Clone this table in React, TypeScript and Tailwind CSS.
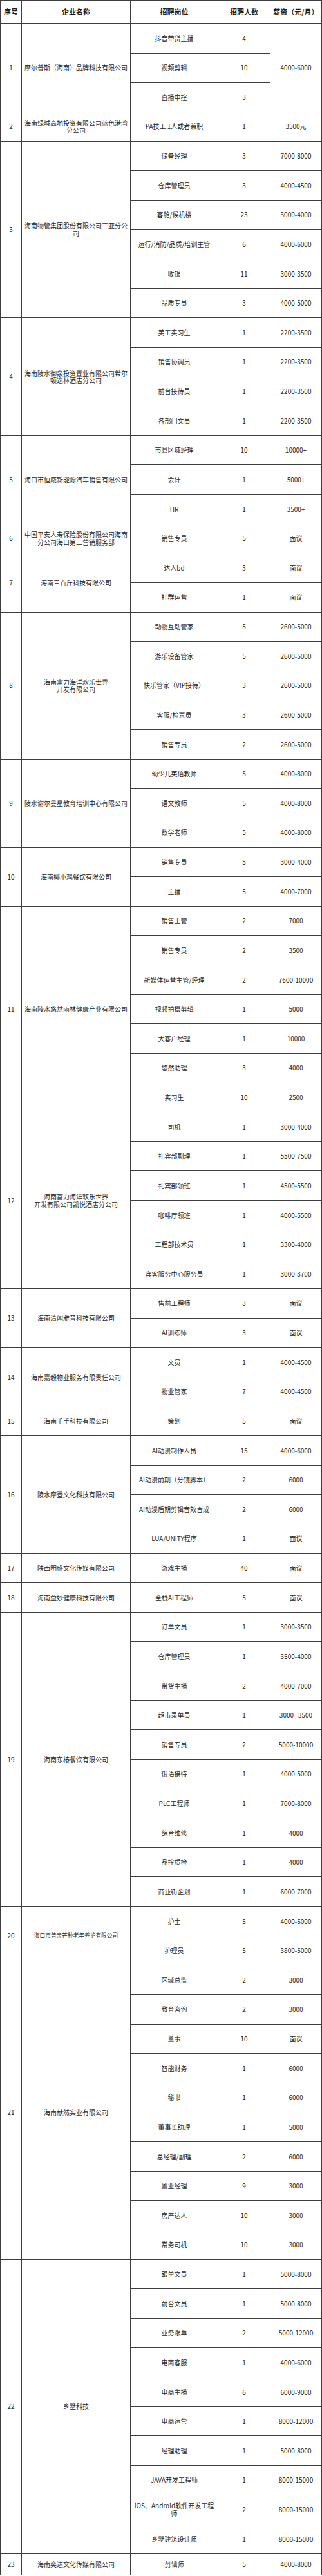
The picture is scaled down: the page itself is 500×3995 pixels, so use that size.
import * as React from 'react'
import clsx from 'clsx'

type Job = [string, string, string]

type Company = {
  name: string[]
  jobs: Job[]
  // one salary cell spanning every job row
  pay?: string
  small?: boolean
}

const spans: Record<number, string> = {
  1: 'row-span-1',
  2: 'row-span-2',
  3: 'row-span-3',
  4: 'row-span-4',
  5: 'row-span-5',
  6: 'row-span-6',
  7: 'row-span-7',
  10: 'row-span-10',
}

const companies: Company[] = [
  {
    name: ['摩尔普斯（海南）品牌科技有限公司'],
    pay: '4000-6000',
    jobs: [
      ['抖音带货主播', '4', ''],
      ['视频剪辑', '10', ''],
      ['直播中控', '3', ''],
    ],
  },
  {
    name: ['海南绿城高地投资有限公司蓝色港湾分公司'],
    jobs: [['PA技工 1人或者兼职', '1', '3500元']],
  },
  {
    name: ['海南物管集团股份有限公司三亚分公司'],
    jobs: [
      ['储备经理', '3', '7000-8000'],
      ['仓库管理员', '3', '4000-4500'],
      ['客舱/候机楼', '23', '3000-4000'],
      ['运行/消防/品质/培训主管', '6', '4000-6000'],
      ['收银', '11', '3000-3500'],
      ['品质专员', '3', '4000-5000'],
    ],
  },
  {
    name: ['海南陵水御泉投资置业有限公司希尔顿逸林酒店分公司'],
    jobs: [
      ['美工实习生', '1', '2200-3500'],
      ['销售协调员', '1', '2200-3500'],
      ['前台接待员', '1', '2200-3500'],
      ['各部门文员', '1', '2200-3500'],
    ],
  },
  {
    name: ['海口市恒威新能源汽车销售有限公司'],
    jobs: [
      ['市县区域经理', '10', '10000+'],
      ['会计', '1', '5000+'],
      ['HR', '1', '3500+'],
    ],
  },
  {
    name: ['中国平安人寿保险股份有限公司海南分公司海口第二营销服务部'],
    jobs: [['销售专员', '5', '面议']],
  },
  {
    name: ['海南三百斤科技有限公司'],
    jobs: [
      ['达人bd', '3', '面议'],
      ['社群运营', '1', '面议'],
    ],
  },
  {
    name: ['海南富力海洋欢乐世界', '开发有限公司'],
    jobs: [
      ['动物互动管家', '5', '2600-5000'],
      ['游乐设备管家', '5', '2600-5000'],
      ['快乐管家（VIP接待）', '3', '2600-5000'],
      ['客服/检票员', '3', '2600-5000'],
      ['销售专员', '2', '2600-5000'],
    ],
  },
  {
    name: ['陵水谢尔曼星教育培训中心有限公司'],
    jobs: [
      ['幼少儿英语教师', '5', '4000-8000'],
      ['语文教师', '5', '4000-8000'],
      ['数学老师', '5', '4000-8000'],
    ],
  },
  {
    name: ['海南椰小鸡餐饮有限公司'],
    jobs: [
      ['销售专员', '5', '3000-4000'],
      ['主播', '5', '4000-7000'],
    ],
  },
  {
    name: ['海南陵水悠然雨林健康产业有限公司'],
    jobs: [
      ['销售主管', '2', '7000'],
      ['销售专员', '2', '3500'],
      ['新媒体运营主管/经理', '2', '7600-10000'],
      ['视频拍摄剪辑', '1', '5000'],
      ['大客户经理', '1', '10000'],
      ['悠然助理', '3', '4000'],
      ['实习生', '10', '2500'],
    ],
  },
  {
    name: ['海南富力海洋欢乐世界', '开发有限公司凯悦酒店分公司'],
    jobs: [
      ['司机', '1', '3000-4000'],
      ['礼宾部副理', '1', '5500-7500'],
      ['礼宾部领班', '1', '4500-5500'],
      ['咖啡厅领班', '1', '4000-5500'],
      ['工程部技术员', '1', '3300-4000'],
      ['宾客服务中心服务员', '1', '3000-3700'],
    ],
  },
  {
    name: ['海南清闻雅音科技有限公司'],
    jobs: [
      ['售前工程师', '3', '面议'],
      ['AI训练师', '3', '面议'],
    ],
  },
  {
    name: ['海南嘉毅物业服务有限责任公司'],
    jobs: [
      ['文员', '1', '4000-4500'],
      ['物业管家', '7', '4000-4500'],
    ],
  },
  {
    name: ['海南千手科技有限公司'],
    jobs: [['策划', '5', '面议']],
  },
  {
    name: ['陵水摩登文化科技有限公司'],
    jobs: [
      ['AI动漫制作人员', '15', '4000-6000'],
      ['AI动漫前期（分镜脚本）', '2', '6000'],
      ['AI动漫后期剪辑音效合成', '2', '6000'],
      ['LUA/UNITY程序', '1', '面议'],
    ],
  },
  {
    name: ['陕西明盛文化传媒有限公司'],
    jobs: [['游戏主播', '40', '面议']],
  },
  {
    name: ['海南益妙健康科技有限公司'],
    jobs: [['全栈AI工程师', '5', '面议']],
  },
  {
    name: ['海南东椿餐饮有限公司'],
    jobs: [
      ['订单文员', '1', '3000-3500'],
      ['仓库管理员', '1', '3500-4000'],
      ['带货主播', '2', '4000-7000'],
      ['超市录单员', '1', '3000--3500'],
      ['销售专员', '2', '5000-10000'],
      ['俄语接待', '1', '4000-5000'],
      ['PLC工程师', '1', '7000-8000'],
      ['综合维修', '1', '4000'],
      ['品控质检', '1', '4000'],
      ['商业街企划', '1', '6000-7000'],
    ],
  },
  {
    name: ['海口市普亲芒种老年养护有限公司'],
    small: true,
    jobs: [
      ['护士', '5', '4000-5000'],
      ['护理员', '5', '3800-5000'],
    ],
  },
  {
    name: ['海南献然实业有限公司'],
    jobs: [
      ['区域总监', '2', '3000'],
      ['教育咨询', '2', '3000'],
      ['董事', '10', '面议'],
      ['智能财务', '1', '6000'],
      ['秘书', '1', '6000'],
      ['董事长助理', '1', '5000'],
      ['总经理/副理', '2', '6000'],
      ['置业经理', '9', '3000'],
      ['房产达人', '10', '3000'],
      ['常务司机', '10', '3000'],
    ],
  },
  {
    name: ['乡墅科技'],
    jobs: [
      ['跟单文员', '1', '5000-8000'],
      ['前台文员', '1', '5000-8000'],
      ['业务跟单', '2', '5000-12000'],
      ['电商客服', '1', '4000-6000'],
      ['电商主播', '6', '6000-9000'],
      ['电商运营', '1', '8000-12000'],
      ['经理助理', '1', '5000-8000'],
      ['JAVA开发工程师', '1', '8000-15000'],
      ['iOS、Android软件开发工程师', '2', '8000-15000'],
      ['乡墅建筑设计师', '1', '8000-15000'],
    ],
  },
  {
    name: ['海南奕达文化传媒有限公司'],
    jobs: [['剪辑师', '5', '4000-8000']],
  },
]

function Cell({className, children}: {className?: string; children?: React.ReactNode}) {
  return (
    <div className={clsx('flex flex-col items-center justify-center bg-white px-[3px] text-center', className)}>
      {children}
    </div>
  )
}

const headers = ['序号', '企业名称', '招聘岗位', '招聘人数', '薪资（元/月）']

export default function App() {
  return (
    <div className="w-[500px] bg-white font-['Noto_Sans_CJK_SC',sans-serif]">
      <div className="grid grid-cols-[32px_168px_135px_80px_1fr] grid-rows-[35px_repeat(86,44.64px)_32px] gap-px bg-[#3e3e3e] p-px text-[10px] leading-[11.5px] text-[#262626]">
        {headers.map(h => (
          <Cell key={h} className="bg-[#daeef3] text-[11px] font-bold text-[#1e1e1e]">
            {h}
          </Cell>
        ))}

        {companies.map((c, i) => {
          const n = c.jobs.length
          return (
            <React.Fragment key={i}>
              <Cell className={spans[n]}>{i + 1}</Cell>
              <Cell className={clsx(spans[n], c.small && 'text-[8.7px]')}>
                {c.name.map(line => (
                  <span key={line} className="block">
                    {line}
                  </span>
                ))}
              </Cell>
              {c.jobs.map((j, k) => (
                <React.Fragment key={k}>
                  <Cell>{j[0]}</Cell>
                  <Cell>{j[1]}</Cell>
                  {c.pay ? k === 0 && <Cell className={spans[n]}>{c.pay}</Cell> : <Cell>{j[2]}</Cell>}
                </React.Fragment>
              ))}
            </React.Fragment>
          )
        })}
      </div>
    </div>
  )
}
